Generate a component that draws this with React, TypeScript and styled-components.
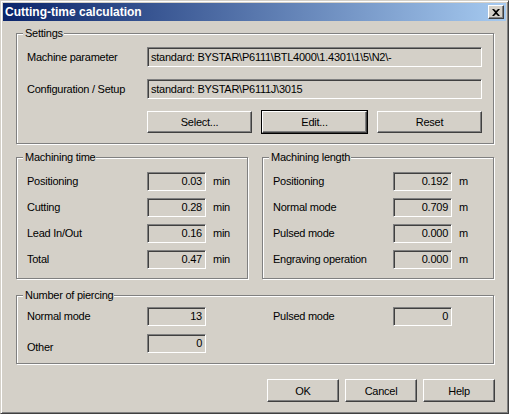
import React from 'react'
import styled, { createGlobalStyle } from 'styled-components'

const FACE = '#d4d0c8'
const SHADOW = '#808080'
const DARK = '#404040'
const LIGHT = '#ffffff'

const GlobalStyle = createGlobalStyle`
  html, body {
    margin: 0;
    padding: 0;
    background: ${FACE};
  }
  * {
    box-sizing: border-box;
  }
  body {
    font-family: 'Liberation Sans', Arial, sans-serif;
    font-size: 11px;
    letter-spacing: -0.25px;
    color: #000;
  }
`

type TimeRow = { label: string; value: string; unit: string }

const timeRows: TimeRow[] = [
  { label: 'Positioning', value: '0.03', unit: 'min' },
  { label: 'Cutting', value: '0.28', unit: 'min' },
  { label: 'Lead In/Out', value: '0.16', unit: 'min' },
  { label: 'Total', value: '0.47', unit: 'min' },
]

const lengthRows: TimeRow[] = [
  { label: 'Positioning', value: '0.192', unit: 'm' },
  { label: 'Normal mode', value: '0.709', unit: 'm' },
  { label: 'Pulsed mode', value: '0.000', unit: 'm' },
  { label: 'Engraving operation', value: '0.000', unit: 'm' },
]

const CloseIcon = () => (
  <svg width="8" height="7" viewBox="0 0 8 7">
    <path d="M0 0h2l2 2 2-2h2L5 3.5 8 7H6L4 5 2 7H0l3-3.5z" fill="#000" />
  </svg>
)

const App: React.FC = () => {
  return (
    <>
      <GlobalStyle />
      <Window>
        <TitleBar>
          <Title>Cutting-time calculation</Title>
          <CloseButton aria-label="Close">
            <CloseIcon />
          </CloseButton>
        </TitleBar>

        <Body>
          <SettingsGroup>
            <Caption>Settings</Caption>
            <SettingsGrid>
              <Label>Machine parameter</Label>
              <Field>standard: BYSTAR\P6111\BTL4000\1.4301\1\5\N2\-</Field>
              <Label>Configuration / Setup</Label>
              <Field>standard: BYSTAR\P6111J\3015</Field>
              <ButtonRow>
                <Button width={105}>Select...</Button>
                <DefaultButton width={105}>Edit...</DefaultButton>
                <Button width={105}>Reset</Button>
              </ButtonRow>
            </SettingsGrid>
          </SettingsGroup>

          <Columns>
            <MachiningGroup>
              <Caption>Machining time</Caption>
              <ValueGrid>
                {timeRows.map((row) => (
                  <React.Fragment key={row.label}>
                    <Label>{row.label}</Label>
                    <NumberField>{row.value}</NumberField>
                    <Unit>{row.unit}</Unit>
                  </React.Fragment>
                ))}
              </ValueGrid>
            </MachiningGroup>

            <MachiningGroup>
              <Caption>Machining length</Caption>
              <ValueGrid>
                {lengthRows.map((row) => (
                  <React.Fragment key={row.label}>
                    <Label>{row.label}</Label>
                    <NumberField>{row.value}</NumberField>
                    <Unit>{row.unit}</Unit>
                  </React.Fragment>
                ))}
              </ValueGrid>
            </MachiningGroup>
          </Columns>

          <PiercingGroup>
            <Caption>Number of piercing</Caption>
            <PiercingGrid>
              <Label>Normal mode</Label>
              <NumberField>13</NumberField>
              <span />
              <Label>Pulsed mode</Label>
              <NumberField>0</NumberField>
              <LowLabel>Other</LowLabel>
              <NumberField>0</NumberField>
            </PiercingGrid>
          </PiercingGroup>

          <Footer>
            <Button width={72} height={23}>OK</Button>
            <Button width={72} height={23}>Cancel</Button>
            <Button width={72} height={23}>Help</Button>
          </Footer>
        </Body>
      </Window>
    </>
  )
}

const Window = styled.div`
  width: 509px;
  height: 414px;
  padding: 2px;
  background: ${FACE};
  border: 1px solid;
  border-color: ${FACE} ${DARK} ${DARK} ${FACE};
  box-shadow: inset 1px 1px 0 ${LIGHT}, inset -1px -1px 0 ${SHADOW};
  display: flex;
  flex-direction: column;
  overflow: hidden;
`
const TitleBar = styled.div`
  height: 18px;
  display: flex;
  align-items: center;
  justify-content: space-between;
  padding: 0 2px 0 2px;
  background: linear-gradient(to right, #0a246a, #a6caf0);
`
const Title = styled.span`
  color: #fff;
  font-weight: bold;
  font-size: 12px;
  line-height: 18px;
  letter-spacing: 0;
`
const CloseButton = styled.div`
  width: 16px;
  height: 14px;
  display: flex;
  align-items: center;
  justify-content: center;
  background: ${FACE};
  border: 1px solid;
  border-color: ${LIGHT} ${DARK} ${DARK} ${LIGHT};
  box-shadow: inset -1px -1px 0 ${SHADOW};
`
const Body = styled.div`
  flex: 1;
  display: flex;
  flex-direction: column;
  padding: 0 12px 0 13px;
`
const Group = styled.div`
  position: relative;
  border: 1px solid ${SHADOW};
  box-shadow: inset 1px 1px 0 ${LIGHT}, 1px 1px 0 ${LIGHT};
`
const Caption = styled.span`
  position: absolute;
  top: -7px;
  left: 6px;
  padding: 0 1px 0 2px;
  line-height: 13px;
  background: ${FACE};
`
const SettingsGroup = styled(Group)`
  margin-top: 12px;
  height: 111px;
  padding: 13px 10px 0 10px;
`
const SettingsGrid = styled.div`
  display: grid;
  grid-template-columns: 120px 335px;
  grid-auto-rows: 20px;
  row-gap: 12px;
  align-items: center;
`
const Label = styled.span`
  line-height: 13px;
  white-space: nowrap;
`
const LowLabel = styled(Label)`
  align-self: end;
  margin-bottom: -1px;
`
const Sunken = styled.div`
  background: ${FACE};
  border: 1px solid;
  border-color: ${SHADOW} ${LIGHT} ${LIGHT} ${SHADOW};
  box-shadow: inset 1px 1px 0 ${DARK};
  white-space: nowrap;
  overflow: hidden;
`
const Field = styled(Sunken)`
  height: 20px;
  line-height: 18px;
  padding: 0 3px;
`
const NumberField = styled(Sunken)`
  width: 59px;
  height: 19px;
  line-height: 17px;
  padding: 0 3px 0 0;
  text-align: right;
`
const ButtonRow = styled.div`
  grid-column: 2;
  display: flex;
  justify-content: space-between;
  margin-top: 1px;
  height: 22px;
`
const Button = styled.div<{ width: number; height?: number }>`
  width: ${({ width }) => width}px;
  height: ${({ height }) => height ?? 22}px;
  display: flex;
  align-items: center;
  justify-content: center;
  background: ${FACE};
  border: 1px solid;
  border-color: ${LIGHT} ${DARK} ${DARK} ${LIGHT};
  box-shadow: inset -1px -1px 0 ${SHADOW};
`
const DefaultButton = styled(Button)`
  outline: 1px solid #000;
`
const Columns = styled.div`
  display: grid;
  grid-template-columns: 232px 232px;
  column-gap: 14px;
  margin-top: 13px;
`
const MachiningGroup = styled(Group)`
  height: 122px;
  padding: 14px 10px 0 10px;
`
const ValueGrid = styled.div`
  display: grid;
  grid-template-columns: 120px 59px auto;
  grid-auto-rows: 19px;
  row-gap: 7px;
  align-items: center;
`
const Unit = styled.span`
  padding-left: 7px;
  line-height: 13px;
`
const PiercingGroup = styled(Group)`
  margin-top: 16px;
  height: 69px;
  padding: 11px 10px 0 10px;
`
const PiercingGrid = styled.div`
  display: grid;
  grid-template-columns: 120px 59px 67px 120px 59px;
  grid-auto-rows: 19px;
  row-gap: 8px;
  align-items: center;
`
const Footer = styled.div`
  display: flex;
  justify-content: flex-end;
  gap: 6px;
  margin-top: 15px;
  margin-right: -1px;
`

export default App
